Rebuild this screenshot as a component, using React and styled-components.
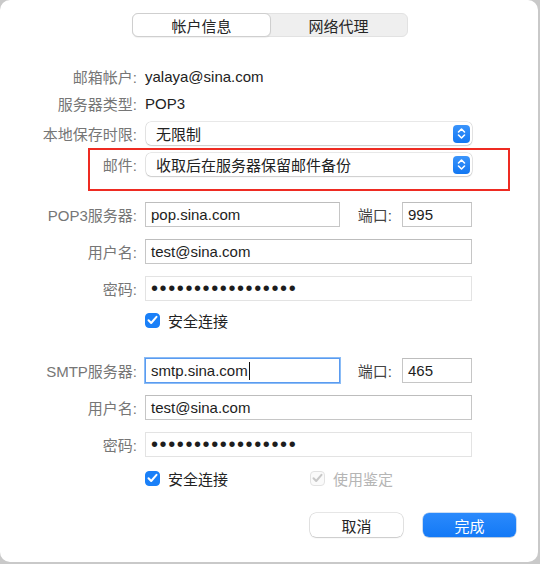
import React from "react";
import styled, { createGlobalStyle } from "styled-components";

const GlobalStyle = createGlobalStyle`
  html, body {
    margin: 0;
    padding: 0;
    background: #c9c9c9;
  }
  body {
    font-family: "Liberation Sans", "Noto Sans CJK SC", sans-serif;
    font-size: 15px;
    color: #222;
  }
`;

const Window = styled.div`
  width: 538px;
  height: 562px;
  background: #ffffff;
  border-radius: 10px;
  padding-top: 13px;
  box-sizing: border-box;
  display: flex;
  flex-direction: column;
  overflow: hidden;
`;

const Segmented = styled.div`
  align-self: flex-start;
  margin-left: 132px;
  width: 276px;
  height: 24px;
  box-sizing: border-box;
  display: flex;
  background: #efefef;
  border: 1px solid #e2e2e2;
  border-radius: 6px;
`;

const Segment = styled.div`
  flex: 1;
  display: flex;
  align-items: center;
  justify-content: center;
  color: #262626;
  margin: -1px;
  border-radius: 6px;
  background: ${({ $active }) => ($active ? "#ffffff" : "transparent")};
  border: 1px solid ${({ $active }) => ($active ? "#cfcfcf" : "transparent")};
  box-shadow: ${({ $active }) => ($active ? "0 1px 1px rgba(0,0,0,0.06)" : "none")};
`;

const Row = styled.div`
  display: flex;
  align-items: center;
  height: ${({ $h }) => $h || 25}px;
  margin-top: ${({ $mt }) => $mt || 0}px;
`;

const Label = styled.div`
  width: ${({ $w }) => $w || 137}px;
  flex: none;
  text-align: right;
  color: #767676;
  white-space: nowrap;
  margin-right: 8px;
`;

const Value = styled.div`
  color: #222;
`;

const Fields = styled.div`
  width: 327px;
  display: flex;
  align-items: center;
`;

const Highlight = styled.div`
  margin-top: 3px;
  margin-left: 88px;
  width: 422px;
  height: 43px;
  box-sizing: border-box;
  border: 2px solid #ee2b22;
  padding-top: 3px;
`;

const Select = styled.div`
  width: 326px;
  height: 23px;
  margin-left: 1px;
  box-sizing: border-box;
  background: #fff;
  border-radius: 5px;
  box-shadow: 0 0 0 0.5px rgba(0, 0, 0, 0.18), 0 1px 1.5px rgba(0, 0, 0, 0.12);
  display: flex;
  align-items: center;
  justify-content: space-between;
  padding: 0 2px 0 10px;
  color: #222;
`;

const Stepper = styled.div`
  width: 17px;
  height: 18px;
  border-radius: 4px;
  background: linear-gradient(#3a94fb, #1277f2);
  display: flex;
  align-items: center;
  justify-content: center;
`;

const Input = styled.div`
  width: ${({ $w }) => ($w ? `${$w}px` : "100%")};
  height: 25px;
  flex: none;
  box-sizing: border-box;
  border: 1px solid ${({ $light }) => ($light ? "#e3e3e3" : "#c6c6c6")};
  border-top-color: ${({ $light }) => ($light ? "#e3e3e3" : "#bdbdbd")};
  display: flex;
  align-items: center;
  padding-left: 5px;
  color: #1d1d1d;
  background: #fff;
  white-space: nowrap;
  ${({ $focus }) =>
    $focus &&
    `
    border: 1px solid #5a9bf0;
    box-shadow: 0 0 0 1px #8bbcf6;
  `}
`;

const Caret = styled.span`
  display: inline-block;
  width: 1px;
  height: 18px;
  background: #111;
  margin-left: 1px;
`;

const Dots = styled.span`
  font-size: 20px;
  letter-spacing: 1.6px;
  line-height: 1;
  color: #1d1d1d;
  position: relative;
  top: -1px;
`;

const PortLabel = styled.div`
  margin-left: auto;
  margin-right: 10px;
  color: #444;
  white-space: nowrap;
`;

const Check = styled.label`
  display: flex;
  align-items: center;
  gap: 8px;
  color: ${({ $disabled }) => ($disabled ? "#b5b5b5" : "#222")};
  margin-left: ${({ $ml }) => $ml || 0}px;
`;

const Box = styled.span`
  width: 15px;
  height: 15px;
  box-sizing: border-box;
  border-radius: 4px;
  display: flex;
  align-items: center;
  justify-content: center;
  background: ${({ $disabled }) => ($disabled ? "#fafafa" : "#1a80f8")};
  border: 1px solid ${({ $disabled }) => ($disabled ? "#e2e2e2" : "#1a80f8")};
`;

const Buttons = styled.div`
  display: flex;
  justify-content: flex-end;
  gap: 20px;
  padding-right: 22px;
  margin-top: 25px;
`;

const Button = styled.div`
  width: 93px;
  height: 24px;
  box-sizing: border-box;
  border-radius: 6px;
  display: flex;
  align-items: center;
  justify-content: center;
  color: ${({ $primary }) => ($primary ? "#fff" : "#262626")};
  background: ${({ $primary }) => ($primary ? "linear-gradient(#2b8afc, #1379f6)" : "#fff")};
  box-shadow: ${({ $primary }) =>
    $primary
      ? "0 0 0 0.5px rgba(0,90,200,0.4), 0 1px 1px rgba(0,0,0,0.1)"
      : "0 0 0 0.5px rgba(0,0,0,0.2), 0 1px 1.5px rgba(0,0,0,0.12)"};
`;

const StepIcon = () => (
  <Stepper>
    <svg width="9" height="13" viewBox="0 0 9 13" fill="none" stroke="#fff" strokeWidth="1.6" strokeLinecap="round" strokeLinejoin="round">
      <path d="M1.5 5 L4.5 2 L7.5 5" />
      <path d="M1.5 8 L4.5 11 L7.5 8" />
    </svg>
  </Stepper>
);

const CheckBox = ({ disabled, label, ml }) => (
  <Check $disabled={disabled} $ml={ml}>
    <Box $disabled={disabled}>
      <svg width="11" height="10" viewBox="0 0 11 10" fill="none" stroke={disabled ? "#c8c8c8" : "#fff"} strokeWidth="2" strokeLinecap="round" strokeLinejoin="round">
        <path d="M1.5 5.2 L4.2 8 L9.5 1.8" />
      </svg>
    </Box>
    {label}
  </Check>
);

const DOTS = "•".repeat(17);

const ServerRow = ({ label, host, port, focus, mt }) => (
  <Row $mt={mt}>
    <Label>{label}</Label>
    <Fields>
      <Input $w={195} $focus={focus}>
        {host}
        {focus && <Caret />}
      </Input>
      <PortLabel>端口:</PortLabel>
      <Input $w={70}>{port}</Input>
    </Fields>
  </Row>
);

const App = () => (
  <>
    <GlobalStyle />
    <Window>
      <Segmented>
        <Segment $active>帐户信息</Segment>
        <Segment>网络代理</Segment>
      </Segmented>

      <Row $h={22} $mt={28}>
        <Label>邮箱帐户:</Label>
        <Value>yalaya@sina.com</Value>
      </Row>
      <Row $h={22} $mt={5}>
        <Label>服务器类型:</Label>
        <Value>POP3</Value>
      </Row>
      <Row $h={23} $mt={8}>
        <Label>本地保存时限:</Label>
        <Select>
          无限制
          <StepIcon />
        </Select>
      </Row>
      <Highlight>
        <Row $h={23}>
          <Label $w={47}>邮件:</Label>
          <Select>
            收取后在服务器保留邮件备份
            <StepIcon />
          </Select>
        </Row>
      </Highlight>

      <ServerRow label="POP3服务器:" host="pop.sina.com" port="995" mt={11} />
      <Row $mt={12}>
        <Label>用户名:</Label>
        <Input $w={327}>test@sina.com</Input>
      </Row>
      <Row $mt={12}>
        <Label>密码:</Label>
        <Input $w={327} $light>
          <Dots>{DOTS}</Dots>
        </Input>
      </Row>
      <Row $h={20} $mt={9}>
        <Label />
        <CheckBox label="安全连接" />
      </Row>

      <ServerRow label="SMTP服务器:" host="smtp.sina.com" port="465" focus mt={28} />
      <Row $mt={12}>
        <Label>用户名:</Label>
        <Input $w={327}>test@sina.com</Input>
      </Row>
      <Row $mt={12}>
        <Label>密码:</Label>
        <Input $w={327} $light>
          <Dots>{DOTS}</Dots>
        </Input>
      </Row>
      <Row $h={20} $mt={11}>
        <Label />
        <CheckBox label="安全连接" />
        <CheckBox label="使用鉴定" disabled ml={82} />
      </Row>

      <Buttons>
        <Button>取消</Button>
        <Button $primary>完成</Button>
      </Buttons>
    </Window>
  </>
);

export default App;
